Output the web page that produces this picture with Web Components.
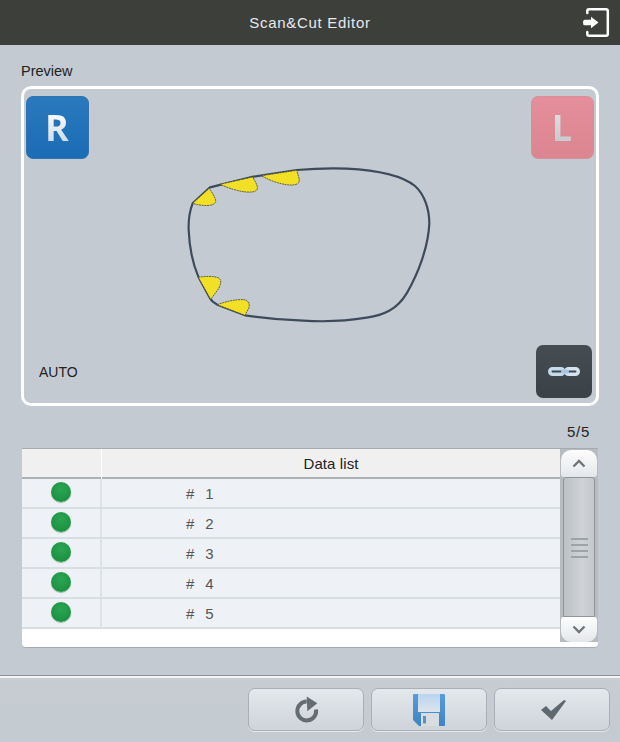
<!DOCTYPE html>
<html>
<head>
<meta charset="utf-8">
<title>Scan&amp;Cut Editor</title>
<style>
  html, body { margin: 0; padding: 0; }
  body {
    width: 620px;
    height: 742px;
    overflow: hidden;
    background: #c3cad1;
    font-family: "Liberation Sans", Arial, sans-serif;
    display: flex;
    flex-direction: column;
  }
</style>
</head>
<body>
<editor-header>Scan&amp;Cut Editor</editor-header>
<preview-panel>
  <eye-badge side="R" slot="right"></eye-badge>
  <eye-badge side="L" slot="left"></eye-badge>
  <lens-shape slot="lens"></lens-shape>
  <link-button slot="link"></link-button>
</preview-panel>
<data-list count="5/5">
  <data-row>1</data-row>
  <data-row>2</data-row>
  <data-row>3</data-row>
  <data-row>4</data-row>
  <data-row>5</data-row>
</data-list>
<editor-footer>
  <tool-button icon="redo"></tool-button>
  <tool-button icon="save"></tool-button>
  <tool-button icon="ok"></tool-button>
</editor-footer>

<script>
class EditorHeader extends HTMLElement {
  constructor() {
    super();
    this.attachShadow({ mode: "open" });
    this.shadowRoot.innerHTML = `
      <style>
        :host {
          display: flex;
          align-items: center;
          justify-content: center;
          height: 45px;
          background: #3d3f3b;
          color: #e6e9ee;
          font-size: 15px;
          letter-spacing: 0.7px;
          padding-bottom: 1px;
          box-sizing: border-box;
          position: relative;
        }
        svg { position: absolute; right: 9px; top: 7px; }
      </style>
      <slot></slot>
      <svg width="30" height="31" viewBox="0 0 30 31">
        <path d="M6.300 6V4Q6.300 2.300 8 2.300H25Q26.800 2.300 26.800 4V27Q26.800 28.800 25 28.800H8Q6.300 28.800 6.300 27V25" fill="none" stroke="#fff" stroke-width="2.500" stroke-linecap="round"/>
        <path d="M3.500 12.800H10V9.800L17.500 15.500L10 21.200V18.200H3.500Q2 18.200 2 15.500Q2 12.800 3.500 12.800Z" fill="#fff"/>
      </svg>`;
  }
}

class EyeBadge extends HTMLElement {
  constructor() {
    super();
    this.attachShadow({ mode: "open" });
    const side = this.getAttribute("side");
    const left = side === "L";
    this.shadowRoot.innerHTML = `
      <style>
        :host {
          display: flex;
          align-items: center;
          justify-content: center;
          width: 63px;
          height: 63px;
          border-radius: 7px;
          box-sizing: border-box;
          background: ${left ? "linear-gradient(#e48f9b, #db8591)" : "linear-gradient(#2a79bd, #1a6cb5)"};
          border: 1px solid ${left ? "#d88f9a" : "#2f74b0"};
        }
        span {
          font: bold 36px "Open Sans", sans-serif;
          line-height: 1;
          background: ${left ? "linear-gradient(#e0e0e2, #c4c8cc)" : "linear-gradient(#ffffff, #c8d8e8)"};
          -webkit-background-clip: text;
          background-clip: text;
          color: transparent;
          margin-left: -1px;
        }
      </style>
      <span>${side}</span>`;
  }
}

class LensShape extends HTMLElement {
  constructor() {
    super();
    this.attachShadow({ mode: "open" });
    this.shadowRoot.innerHTML = `
      <style>
        :host { display: block; width: 280px; height: 160px; }
        svg { display: block; }
        .cut { fill: #f2e026; stroke: #4a4a3a; stroke-width: 2.500; stroke-dasharray: 6 2; stroke-linejoin: round; }
      </style>
      <svg width="280" height="160" viewBox="0 45 840 480">
        <path d="M68 160L120 112L250 80L380 60C440 55 500 55 530 56C610 60 690 72 735 108C765 135 778 180 778 220C775 290 745 370 710 430C680 480 640 495 590 503C530 513 450 515 400 512C330 510 270 503 225 496L142 464C130 458 124 452 120 445L85 380C70 345 58 290 56 240C55 210 60 180 68 160Z" fill="none" stroke="#3d4a5c" stroke-width="6.500" stroke-linejoin="round"/>
        <path class="cut" d="M68 160L118 115C126 128 136 142 137 152C137 170 100 170 68 160Z"/>
        <path class="cut" d="M150 103L248 81C256 95 264 108 262 116C258 134 205 128 150 103Z"/>
        <path class="cut" d="M274 77L380 61C384 75 390 88 387 96C380 114 320 104 274 77Z"/>
        <path class="cut" d="M85 382C105 378 135 378 146 384C158 392 150 410 143 420L122 448Z"/>
        <path class="cut" d="M142 464C165 455 200 447 222 449C238 452 240 465 236 475L225 496Z"/>
      </svg>`;
  }
}

class LinkButton extends HTMLElement {
  constructor() {
    super();
    this.attachShadow({ mode: "open" });
    this.shadowRoot.innerHTML = `
      <style>
        :host {
          display: flex;
          align-items: center;
          justify-content: center;
          width: 56px;
          height: 53px;
          border-radius: 7px;
          background: linear-gradient(#454c52, #3a4147);
        }
      </style>
      <svg width="34" height="11" viewBox="0 0 34 11">
        <rect x="2.750" y="2.750" width="14" height="5.500" rx="2.750" fill="none" stroke="#c6daee" stroke-width="3.500"/>
        <rect x="18.750" y="2.750" width="12.500" height="5.500" rx="2.750" fill="none" stroke="#d5e3f0" stroke-width="3.500"/>
        <rect x="14" y="3.500" width="8" height="4" rx="2" fill="#a9c6e3"/>
      </svg>`;
  }
}

class PreviewPanel extends HTMLElement {
  constructor() {
    super();
    this.attachShadow({ mode: "open" });
    this.shadowRoot.innerHTML = `
      <style>
        :host { display: block; padding: 18px 21px 0; color: #222; font-size: 14px; }
        .title { height: 23px; line-height: 16px; font-size: 14.500px; }
        .frame {
          box-sizing: border-box;
          width: 578px;
          height: 320px;
          border: 3px solid #fff;
          border-radius: 10px;
          padding: 7px 2px 5px;
          display: flex;
          flex-direction: column;
        }
        .top, .bottom { display: flex; justify-content: space-between; }
        .lens { display: flex; justify-content: center; margin: 6px 0 20px; }
        .bottom { padding: 0 2px 0 13px; }
        .auto { margin-top: 19px; line-height: 16px; }
      </style>
      <div class="title">Preview</div>
      <div class="frame">
        <div class="top"><slot name="right"></slot><slot name="left"></slot></div>
        <div class="lens"><slot name="lens"></slot></div>
        <div class="bottom"><span class="auto">AUTO</span><slot name="link"></slot></div>
      </div>`;
  }
}

class DataRow extends HTMLElement {
  constructor() {
    super();
    this.attachShadow({ mode: "open" });
    this.shadowRoot.innerHTML = `
      <style>
        :host {
          display: grid;
          grid-template-columns: 80px 1fr;
          height: 30px;
          box-sizing: border-box;
          background: #eef2f6;
          border-bottom: 2px solid #d9dee3;
          color: #555;
          font-size: 15px;
        }
        .state {
          display: flex;
          align-items: center;
          justify-content: center;
          border-right: 2px solid #dde2e7;
          padding-bottom: 2px;
          box-sizing: border-box;
          height: 28px;
        }
        .dot {
          width: 20px;
          height: 20px;
          border-radius: 50%;
          background: radial-gradient(circle at 50% 35%, #2ba653, #17893c);
          box-shadow: 0 1px 1px #8fb79b;
        }
        .no { display: flex; gap: 11px; padding-left: 84px; align-items: center; padding-top: 1px; height: 27px; }
      </style>
      <div class="state"><div class="dot"></div></div>
      <div class="no"><span>#</span><span><slot></slot></span></div>`;
  }
}

class ScrollBar extends HTMLElement {
  constructor() {
    super();
    this.attachShadow({ mode: "open" });
    this.shadowRoot.innerHTML = `
      <style>
        :host {
          display: flex;
          flex-direction: column;
          box-sizing: border-box;
          width: 38px;
          height: 193px;
          padding: 1px 1px 0;
          background: #b7bcc1;
        }
        .btn {
          height: 27px;
          display: flex;
          align-items: center;
          justify-content: center;
          background: linear-gradient(#fdfdfd, #e4e7ea);
          box-sizing: border-box;
        }
        .up { border-radius: 10px 10px 3px 3px; }
        .down { border-radius: 3px 3px 10px 10px; height: 25px; }
        .thumb {
          flex: 1;
          margin: 0 2px;
          border: 1px solid #8f9499;
          border-radius: 3px 3px 0 0;
          background: linear-gradient(90deg, #bcc1c6, #cfd3d7 60%, #c4c8cc);
          display: flex;
          flex-direction: column;
          align-items: center;
          justify-content: center;
          gap: 4px;
          padding-top: 2px;
        }
        .thumb i { display: block; width: 17px; height: 2px; background: #9ea3a8; }
      </style>
      <div class="btn up"><svg width="14" height="9" viewBox="0 0 14 9"><path d="M1.500 7.500L7 2L12.500 7.500" fill="none" stroke="#6f7579" stroke-width="2.400"/></svg></div>
      <div class="thumb"><i></i><i></i><i></i><i></i></div>
      <div class="btn down"><svg width="14" height="9" viewBox="0 0 14 9"><path d="M1.500 1.500L7 7L12.500 1.500" fill="none" stroke="#6f7579" stroke-width="2.400"/></svg></div>`;
  }
}

class DataList extends HTMLElement {
  constructor() {
    super();
    this.attachShadow({ mode: "open" });
    this.shadowRoot.innerHTML = `
      <style>
        :host { display: block; padding: 0 22px; font-size: 15px; color: #222; }
        .count { text-align: right; height: 16px; line-height: 16px; padding: 18px 8px 8px 0; letter-spacing: 0.7px; }
        .table {
          display: flex;
          width: 576px;
          height: 200px;
          box-sizing: border-box;
          background: #fff;
          border-top: 1px solid #a6abb0;
          border-bottom: 1px solid #a6abb0;
          border-radius: 0 0 4px 4px;
          overflow: hidden;
        }
        .main { flex: 1; }
        .head {
          display: grid;
          grid-template-columns: 80px 1fr;
          height: 30px;
          box-sizing: border-box;
          background: #f0f0f0;
          border-bottom: 2px solid #aeb1b3;
        }
        .head div:first-child { border-right: 1px solid #fff; }
        .head div:last-child { text-align: center; line-height: 30px; color: #222; letter-spacing: 0.1px; }
      </style>
      <div class="count">${this.getAttribute("count")}</div>
      <div class="table">
        <div class="main">
          <div class="head"><div></div><div>Data list</div></div>
          <slot></slot>
        </div>
        <scroll-bar></scroll-bar>
      </div>`;
  }
}

const TOOL_ICONS = {
  redo: `<svg width="26" height="30" viewBox="0 0 26 30">
    <path d="M13.700 6.600A9.400 9.400 0 1 0 23 14.500" fill="none" stroke="#646d71" stroke-width="4"/>
    <path d="M13.700 1.500L24.300 8.200L14.300 16.200Z" fill="#646d71"/></svg>`,
  save: `<svg width="34" height="34" viewBox="0 0 34 34">
    <defs>
      <linearGradient id="frame" x1="0" y1="0" x2="0" y2="1"><stop offset="0" stop-color="#5a9bd8"/><stop offset="1" stop-color="#3f83c4"/></linearGradient>
      <linearGradient id="label" x1="0" y1="0" x2="0" y2="1"><stop offset="0" stop-color="#b9d4f0"/><stop offset="1" stop-color="#dde5ec"/></linearGradient>
    </defs>
    <path d="M1 2Q1 1 2 1H32Q33 1 33 2V32Q33 33 32 33H7L1 27Z" fill="url(#frame)"/>
    <rect x="6" y="1" width="22" height="18" fill="url(#label)"/>
    <rect x="9" y="20" width="18" height="13" fill="#d8dde0"/>
    <rect x="11" y="23" width="3" height="7.500" fill="#5a93c8"/></svg>`,
  ok: `<svg width="25" height="21" viewBox="0 0 25 21" style="margin-left:3px">
    <path d="M0 11L5 7L10 12L23 1L25 2L11 21Z" fill="#5f686e"/></svg>`
};

class ToolButton extends HTMLElement {
  constructor() {
    super();
    this.attachShadow({ mode: "open" });
    this.shadowRoot.innerHTML = `
      <style>
        :host {
          display: flex;
          align-items: center;
          justify-content: center;
          box-sizing: border-box;
          width: 116px;
          height: 43px;
          border: 1px solid #a8afb6;
          border-radius: 7px;
          background: linear-gradient(#e3e8ed, #ced4da);
          box-shadow: 0 1px 0 #e6eaee;
        }
      </style>
      ${TOOL_ICONS[this.getAttribute("icon")]}`;
  }
}

class EditorFooter extends HTMLElement {
  constructor() {
    super();
    this.attachShadow({ mode: "open" });
    this.shadowRoot.innerHTML = `
      <style>
        :host {
          display: flex;
          justify-content: flex-end;
          align-items: flex-start;
          gap: 7px;
          margin-top: 28px;
          padding: 10px 10px 0 0;
          border-top: 2px solid #f2f4f6;
          box-shadow: 0 -1px 0 #8e9398;
          background: linear-gradient(#c7cdd3, #c3cad1);
          flex: 1;
        }
      </style>
      <slot></slot>`;
  }
}

customElements.define("editor-header", EditorHeader);
customElements.define("eye-badge", EyeBadge);
customElements.define("lens-shape", LensShape);
customElements.define("link-button", LinkButton);
customElements.define("preview-panel", PreviewPanel);
customElements.define("data-row", DataRow);
customElements.define("scroll-bar", ScrollBar);
customElements.define("data-list", DataList);
customElements.define("tool-button", ToolButton);
customElements.define("editor-footer", EditorFooter);
</script>
</body>
</html>
